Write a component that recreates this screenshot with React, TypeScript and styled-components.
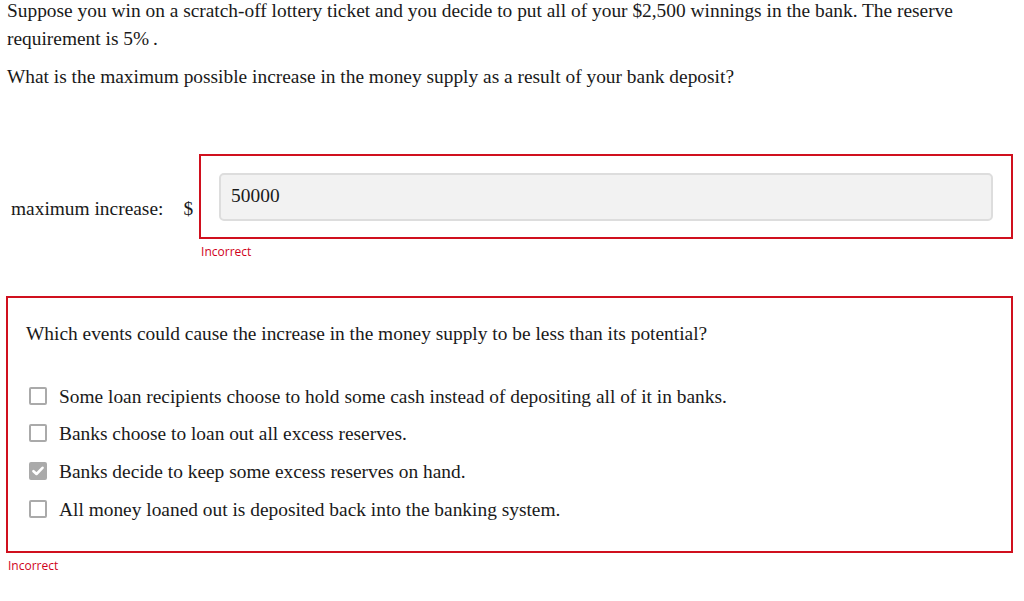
import React from "react";
import styled, { createGlobalStyle } from "styled-components";

const Global = createGlobalStyle`
  html, body { margin: 0; padding: 0; background: #fff; }
  body { font-family: "Liberation Serif", "Times New Roman", serif; color: #1a1a1a; }
`;

const Page = styled.div`
  padding: 0 11px 0 6px;
  font-size: 19.4px;
  line-height: 28px;
`;

const Para = styled.p<{ $top?: number }>`
  margin: ${(p) => p.$top ?? 0}px 0 0 1px;
`;

const AnswerRow = styled.div`
  display: flex;
  align-items: flex-start;
  margin-top: 63px;
`;

const RowLabel = styled.span`
  margin-top: 41.5px;
  padding-left: 5px;
  white-space: nowrap;
`;

const Dollar = styled.span`
  margin: 41.5px 6px 0 20px;
`;

const FieldColumn = styled.div`
  flex: 1;
  display: flex;
  flex-direction: column;
`;

const RedBox = styled.div<{ $pad: string }>`
  border: 2px solid #d0101e;
  padding: ${(p) => p.$pad};
`;

const InputBox = styled.div`
  background: #f2f2f2;
  border: 2px solid #dddddd;
  border-radius: 5px;
  padding: 7px 10px 9px;
  height: 28px;
`;

const Feedback = styled.div<{ $left: number; $top: number }>`
  font-family: "Open Sans", "Segoe UI", sans-serif;
  font-size: 12px;
  line-height: 16px;
  color: #d0021b;
  margin: ${(p) => p.$top}px 0 0 ${(p) => p.$left}px;
`;

const QuestionBlock = styled.div`
  margin-top: 36px;
`;

const Question = styled.div`
  margin-bottom: 35px;
`;

const OptionList = styled.div`
  display: flex;
  flex-direction: column;
  gap: 9.7px;
  padding-left: 3px;
`;

const Option = styled.label`
  display: flex;
  align-items: center;
  gap: 12px;
  height: 28px;
`;

const Check = styled.span<{ $checked?: boolean }>`
  box-sizing: border-box;
  flex: none;
  width: 18px;
  height: 18px;
  border: 2px solid #aaaaaa;
  border-radius: 2px;
  background: ${(p) => (p.$checked ? "#aaaaaa" : "#fff")};
  display: flex;
  align-items: center;
  justify-content: center;
  margin-top: -2px;
`;

const options = [
  { text: "Some loan recipients choose to hold some cash instead of depositing all of it in banks.", checked: false },
  { text: "Banks choose to loan out all excess reserves.", checked: false },
  { text: "Banks decide to keep some excess reserves on hand.", checked: true },
  { text: "All money loaned out is deposited back into the banking system.", checked: false },
];

export default function App() {
  return (
    <>
      <Global />
      <Page>
        <Para $top={-3.5}>
          Suppose you win on a scratch-off lottery ticket and you decide to put all of your $2,500 winnings in the bank. The reserve requirement is 5%&#8201;.
        </Para>
        <Para $top={10}>
          What is the maximum possible increase in the money supply as a result of your bank deposit?
        </Para>

        <AnswerRow>
          <RowLabel>maximum increase:</RowLabel>
          <Dollar>$</Dollar>
          <FieldColumn>
            <RedBox $pad="17px 18px 16px">
              <InputBox>50000</InputBox>
            </RedBox>
            <Feedback $left={2} $top={5}>Incorrect</Feedback>
          </FieldColumn>
        </AnswerRow>

        <QuestionBlock>
          <RedBox $pad="22px 18px 27px">
            <Question>Which events could cause the increase in the money supply to be less than its potential?</Question>
            <OptionList>
              {options.map((o) => (
                <Option key={o.text}>
                  <Check $checked={o.checked}>
                    {o.checked && (
                      <svg width="12" height="10" viewBox="0 0 12 10">
                        <path d="M1.5 5.2 L4.5 8 L10.5 1.8" stroke="#fff" strokeWidth="2.6" fill="none" strokeLinecap="round" strokeLinejoin="round" />
                      </svg>
                    )}
                  </Check>
                  <span>{o.text}</span>
                </Option>
              ))}
            </OptionList>
          </RedBox>
          <Feedback $left={2} $top={5}>Incorrect</Feedback>
        </QuestionBlock>
      </Page>
    </>
  );
}
